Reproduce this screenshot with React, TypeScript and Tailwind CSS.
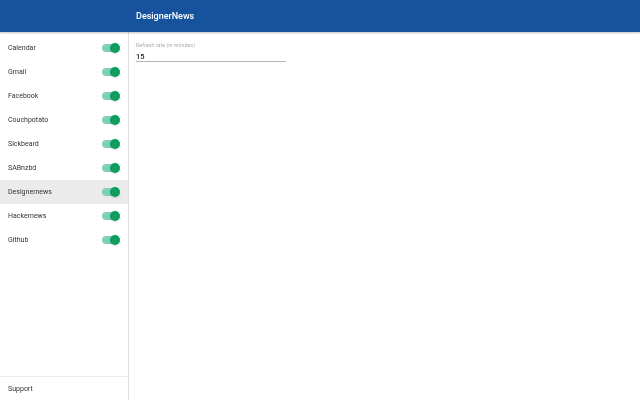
const items = ["Calendar","Gmail","Facebook","Couchpotato","Sickbeard","SABnzbd","Designernews","Hackernews","Github"];

function Toggle() {
  return (
    <div className="relative w-[16px] h-[8px] mr-[10px] rounded-full bg-[#7fd1b3]">
      <div className="absolute right-[-2px] top-[-1px] w-[10px] h-[10px] rounded-full bg-[#0f9d62] shadow-[0_1px_2px_rgba(0,0,0,0.15)]" />
    </div>
  );
}

export default function App() {
  return (
    <div className="w-[640px] h-[400px] flex flex-col bg-white overflow-hidden font-['Roboto',sans-serif] antialiased">
      <header className="h-[32px] shrink-0 bg-[#17539d] flex items-center pl-[136px] pt-[2px] text-[9px] font-medium text-white shadow-[0_1px_2px_rgba(0,0,0,0.25)] z-10">
        <span className="will-change-transform">DesignerNews</span>
      </header>
      <div className="flex flex-1 min-h-0">
        <aside className="w-[129px] shrink-0 border-r border-[#e0e0e0] flex flex-col justify-between">
          <ul className="flex flex-col pt-[4px]">
            {items.map((name) => (
              <li key={name} className={`h-[24px] flex items-center justify-between pl-[8px] text-[7px] text-[#333333] ${name === "Designernews" ? "bg-[#ebebeb]" : ""}`}>
                <span className="pt-[1px] will-change-transform">{name}</span>
                <Toggle />
              </li>
            ))}
          </ul>
          <div className="h-[24px] flex items-center pl-[8px] pt-[1px] text-[7px] text-[#333333] border-t border-[#eeeeee]">
            <span className="will-change-transform">Support</span>
          </div>
        </aside>
        <main className="flex-1 pl-[7px] pt-[9px]">
          <div className="w-[150px] border-b border-[#b5b5b5]">
            <div className="text-[5.4px] leading-[8px] text-[#b0b0b0] will-change-transform">Refresh rate (in minutes)</div>
            <div className="text-[7.5px] leading-[9px] pt-[3px] font-medium text-[#222222] will-change-transform">15</div>
          </div>
        </main>
      </div>
    </div>
  );
}
